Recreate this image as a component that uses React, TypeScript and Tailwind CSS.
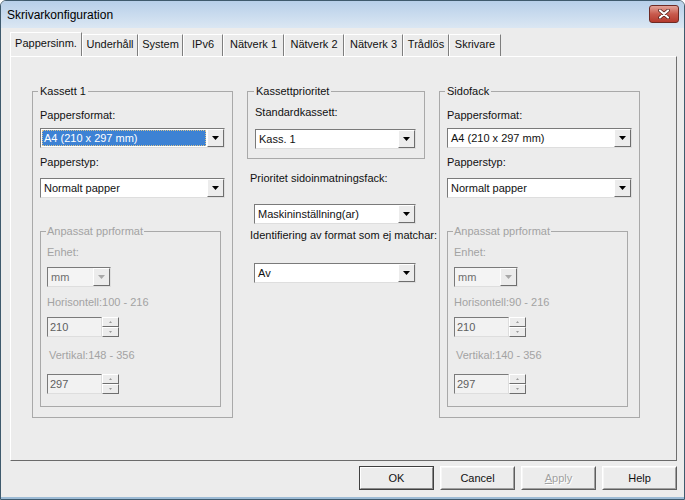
import React from 'react';

const tabs = [
  { label: 'Pappersinm.', w: 'w-[72px]', active: true },
  { label: 'Underhåll', w: 'w-[56px]' },
  { label: 'System', w: 'w-[45px]' },
  { label: 'IPv6', w: 'w-[40px]' },
  { label: 'Nätverk 1', w: 'w-[61px]' },
  { label: 'Nätverk 2', w: 'w-[60px]' },
  { label: 'Nätverk 3', w: 'w-[59px]' },
  { label: 'Trådlös', w: 'w-[46px]' },
  { label: 'Skrivare', w: 'w-[52px]' },
];

function Arrow({ disabled }: { disabled?: boolean }) {
  return (
    <div className="w-[17px] flex items-center justify-center bg-[#ececec] border border-t-white border-l-white border-r-[#6e6e6e] border-b-[#6e6e6e]">
      <svg width="7" height="4" viewBox="0 0 7 4">
        <path d="M0 0h7L3.5 4z" fill={disabled ? '#a8a8a8' : '#000'} />
      </svg>
    </div>
  );
}

function Combo({ text, w, selected, disabled }: { text: string; w: string; selected?: boolean; disabled?: boolean }) {
  return (
    <div className={`flex h-[20px] ${w} border border-t-[#7a7a7a] border-l-[#7a7a7a] border-r-[#dedede] border-b-[#dedede] ${disabled ? 'bg-[#f4f4f4]' : 'bg-white'}`}>
      <div className="flex-1 flex items-stretch p-[1px] min-w-0">
        {selected ? (
          <div className="flex-1 bg-[#3d82d4] border border-dotted border-[#d9c48e] text-white pl-[1px] leading-[14px] whitespace-nowrap">{text}</div>
        ) : (
          <div className={`flex-1 pl-[2px] leading-[16px] whitespace-nowrap ${disabled ? 'text-[#6e6e6e]' : 'text-[#111]'}`}>{text}</div>
        )}
      </div>
      <Arrow disabled={disabled} />
    </div>
  );
}

function Spin({ value }: { value: string }) {
  return (
    <div className="flex h-[20px]">
      <div className="w-[55px] bg-[#f2f2f2] border border-t-[#7a7a7a] border-l-[#7a7a7a] border-r-[#dedede] border-b-[#dedede] text-[#5e5e5e] pl-[2px] leading-[18px]">
        {value}
      </div>
      <div className="w-[17px] flex flex-col">
        <div className="flex-1 flex items-center justify-center bg-[#ececec] border border-t-white border-l-white border-r-[#6e6e6e] border-b-[#6e6e6e]">
          <svg width="3" height="2" viewBox="0 0 3 2"><path d="M1.5 0L3 2H0z" fill="#9a9a9a" /></svg>
        </div>
        <div className="flex-1 flex items-center justify-center bg-[#ececec] border border-t-white border-l-white border-r-[#6e6e6e] border-b-[#6e6e6e]">
          <svg width="3" height="2" viewBox="0 0 3 2"><path d="M0 0h3L1.5 2z" fill="#9a9a9a" /></svg>
        </div>
      </div>
    </div>
  );
}

function Custom({ h, v }: { h: string; v: string }) {
  return (
    <fieldset className="mt-[27px] w-[181px] border border-[#a9a9a9] px-[6px] pb-[12px] m-0 min-w-0">
      <legend className="-ml-[1px] px-[1px] leading-[13px] text-[#a3a3a3]">Anpassat pprformat</legend>
      <div className="flex flex-col text-[#a3a3a3]">
        <div className="mt-[8px] leading-[13px]">Enhet:</div>
        <div className="mt-[8px]">
          <Combo text="mm" w="w-[64px]" disabled />
        </div>
        <div className="mt-[9px] leading-[13px]">{h}</div>
        <div className="mt-[8px]">
          <Spin value="210" />
        </div>
        <div className="mt-[12px] pl-[2px] leading-[13px]">{v}</div>
        <div className="mt-[12px]">
          <Spin value="297" />
        </div>
      </div>
    </fieldset>
  );
}

function Tray({ title, selected, h, v }: { title: string; selected?: boolean; h: string; v: string }) {
  return (
    <fieldset className="w-[201px] h-[333px] border border-[#a9a9a9] px-[7px] m-0 min-w-0">
      <legend className="-ml-[2px] px-[2px] leading-[13px]">{title}</legend>
      <div className="flex flex-col">
        <div className="mt-[11px] leading-[13px]">Pappersformat:</div>
        <div className="mt-[6px]">
          <Combo text="A4 (210 x 297 mm)" w="w-[185px]" selected={selected} />
        </div>
        <div className="mt-[8px] leading-[13px]">Papperstyp:</div>
        <div className="mt-[9px]">
          <Combo text="Normalt papper" w="w-[185px]" />
        </div>
        <Custom h={h} v={v} />
      </div>
    </fieldset>
  );
}

function Btn({ children, isDefault }: { children: React.ReactNode; isDefault?: boolean }) {
  return (
    <div className={`w-[75px] h-[24px] flex items-center justify-center bg-[#ececec] border ${isDefault ? 'border-[#404040]' : 'border-t-white border-l-white border-r-[#5e5e5e] border-b-[#5e5e5e]'}`}>
      <div className={`w-full h-full flex items-center justify-center ${isDefault ? 'border border-t-white border-l-white border-r-[#8a8a8a] border-b-[#8a8a8a]' : 'border border-t-[#f6f6f6] border-l-[#f6f6f6] border-r-[#a0a0a0] border-b-[#a0a0a0]'}`}>
        {children}
      </div>
    </div>
  );
}

export default function App() {
  return (
    <div className="w-[685px] h-[500px] bg-[#ececec] border border-[#3f5a6d] rounded-t-[6px] overflow-hidden flex flex-col font-['Liberation_Sans',Arial,sans-serif] text-[11px] text-[#111]">
      {/* title bar */}
      <div className="h-[27px] shrink-0 flex items-center justify-between bg-linear-to-b from-[#b7cfe9] to-[#dbe7f3] pl-[6px] pr-[5px]">
        <span className="text-[12px] text-black">Skrivarkonfiguration</span>
        <div className="w-[30px] h-[18px] -mt-[2px] rounded-[3px] border border-[#6e2a24] bg-linear-to-b from-[#e2a399] via-[#c85a4d] to-[#b53a2e] flex items-center justify-center">
          <svg width="12" height="10" viewBox="0 0 12 10">
            <path d="M2 1.5l8 7M10 1.5l-8 7" stroke="#4a1a16" strokeWidth="3.6" strokeLinecap="round" />
            <path d="M2 1.5l8 7M10 1.5l-8 7" stroke="#fff" strokeWidth="2.2" strokeLinecap="round" />
          </svg>
        </div>
      </div>

      <div className="flex-1 flex flex-col pl-[9px]">
        {/* tabs */}
        <div className="mt-[4px] h-[24px] flex items-end">
          {tabs.map((t) => (
            <div
              key={t.label}
              className={`${t.w} ${t.active ? 'h-[24px] pb-[3px]' : 'h-[22px] pb-[3px]'} flex items-center justify-center border-t border-l border-t-white border-l-white border-r border-r-[#7e7e7e] whitespace-nowrap`}
            >
              {t.label}
            </div>
          ))}
        </div>

        {/* panel */}
        <div className="w-[667px] h-[405px] border border-t-white border-l-white border-r-[#6f6f6f] border-b-[#6a6a6a] flex items-start pl-[21px] pt-[28px] gap-[14px]">
          <Tray title="Kassett 1" selected h="Horisontell:100 - 216" v="Vertikal:148 - 356" />

          <div className="w-[178px] flex flex-col">
            <fieldset className="h-[74px] border border-[#a9a9a9] px-[7px] m-0 min-w-0">
              <legend className="-ml-[1px] px-[2px] leading-[13px]">Kassettprioritet</legend>
              <div className="flex flex-col">
                <div className="mt-[8px] leading-[13px]">Standardkassett:</div>
                <div className="mt-[10px]">
                  <Combo text="Kass. 1" w="w-[161px]" />
                </div>
              </div>
            </fieldset>
            <div className="mt-[13px] ml-[3px] leading-[13px]">Prioritet sidoinmatningsfack:</div>
            <div className="mt-[19px] ml-[7px]">
              <Combo text="Maskininställning(ar)" w="w-[162px]" />
            </div>
            <div className="mt-[5px] ml-[3px] leading-[13px] whitespace-nowrap">Identifiering av format som ej matchar:</div>
            <div className="mt-[21px] ml-[7px]">
              <Combo text="Av" w="w-[162px]" />
            </div>
          </div>

          <Tray title="Sidofack" h="Horisontell:90 - 216" v="Vertikal:140 - 356" />
        </div>

        {/* buttons */}
        <div className="w-[667px] mt-[5px] flex justify-end gap-[6px]">
          <Btn isDefault>OK</Btn>
          <Btn>Cancel</Btn>
          <Btn>
            <span className="text-[#a0a0a0] [text-shadow:1px_1px_0_#fff]">
              <span className="underline">A</span>pply
            </span>
          </Btn>
          <Btn>Help</Btn>
        </div>
      </div>
      <div className="h-[2px] shrink-0 bg-[#9dbbd5]" />
    </div>
  );
}
